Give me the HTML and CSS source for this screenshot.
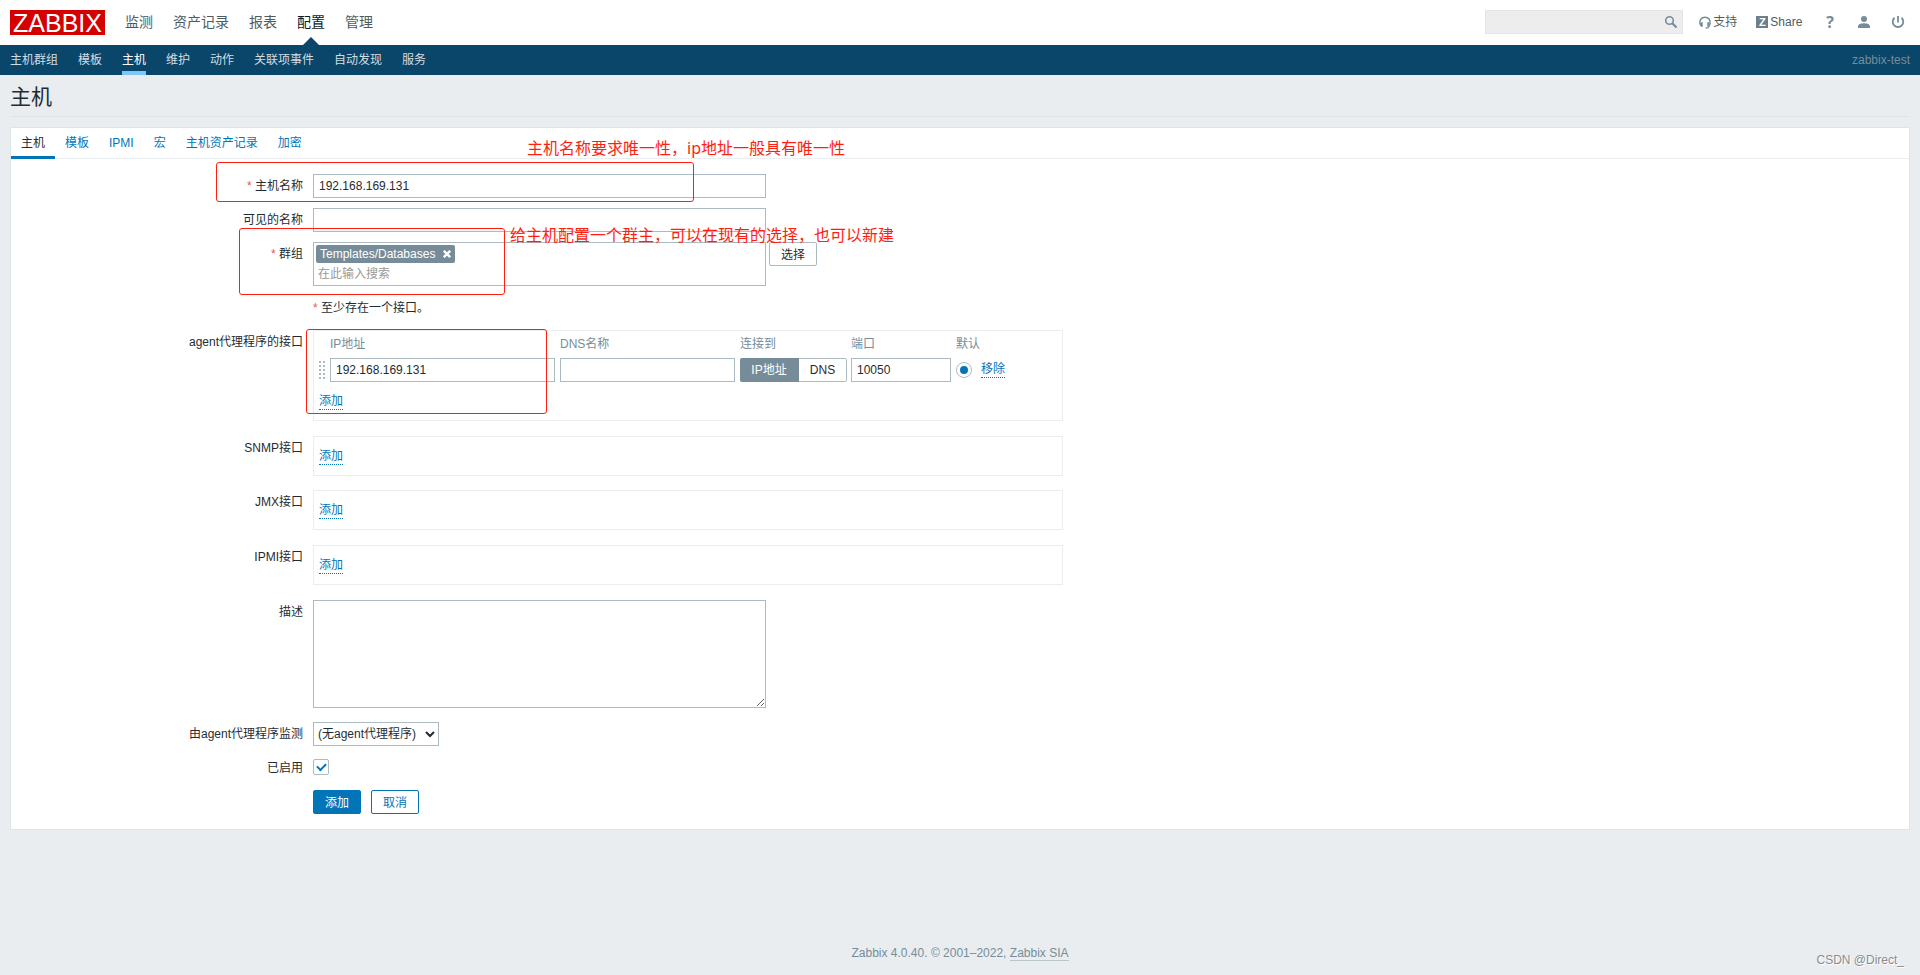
FILE: index.html
```html
<!DOCTYPE html>
<html lang="zh-CN">
<head>
<meta charset="utf-8">
<title>主机</title>
<link rel="stylesheet" href="styles.css">
</head>
<body>
<header>
  <div class="top">
    <a class="logo" href="#">ZABBIX</a>
    <nav class="main-nav" aria-label="主菜单">
      <a href="#">监测</a>
      <a href="#">资产记录</a>
      <a href="#">报表</a>
      <a href="#" class="active">配置</a>
      <a href="#">管理</a>
    </nav>
    <div class="tools">
      <form class="search">
        <input type="text" aria-label="搜索">
        <button type="button" aria-label="搜索">
          <svg width="14" height="14" viewBox="0 0 14 14" fill="none" stroke="#768d99"><circle cx="5.5" cy="5.5" r="3.8" stroke-width="1.6"/><path d="M8.3 8.3l4.2 4.2" stroke-width="2.2"/></svg>
        </button>
      </form>
      <a class="tool-text support" href="#">
        <svg width="12" height="13" viewBox="0 0 12 13" fill="none" stroke="#768d99"><path d="M1.2 8.4C.2 3.6 2.6 1.2 6 1.2s5.8 2.4 4.8 7.2" stroke-width="1.5"/><path d="M2.9 6.2v4.6M9.1 6.2v4.6" stroke-width="1.7"/><path d="M1 7.2q.2 2.6 1.9 3M11 7.2q-.2 3.4-2 4.4l-2.4.4" stroke-width="1.3"/></svg>支持</a>
      <a class="tool-text share" href="#"><span class="z">Z</span>Share</a>
      <a class="help" href="#">?</a>
      <a class="icon" href="#" aria-label="用户"><svg width="14" height="14" viewBox="0 0 14 14" fill="#768d99"><circle cx="7" cy="4" r="3"/><path d="M1 13v-1.5C1 9 4.5 8.3 7 8.3s6 .7 6 3.2V13z"/></svg></a>
      <a class="icon" href="#" aria-label="退出"><svg width="14" height="14" viewBox="0 0 14 14" fill="none" stroke="#768d99" stroke-width="1.8"><path d="M7 1v6.5M3.5 2.7a5.3 5.3 0 1 0 7 0"/></svg></a>
    </div>
  </div>
  <div class="sub">
    <nav class="sub-nav" aria-label="子菜单">
      <a href="#">主机群组</a>
      <a href="#">模板</a>
      <a href="#" class="active">主机</a>
      <a href="#">维护</a>
      <a href="#">动作</a>
      <a href="#">关联项事件</a>
      <a href="#">自动发现</a>
      <a href="#">服务</a>
    </nav>
    <span class="server">zabbix-test</span>
  </div>
</header>

<main>
  <h1>主机</h1>
  <form class="panel">
    <nav class="tabs" aria-label="选项卡">
      <a href="#" class="active">主机</a>
      <a href="#">模板</a>
      <a href="#">IPMI</a>
      <a href="#">宏</a>
      <a href="#">主机资产记录</a>
      <a href="#">加密</a>
    </nav>

    <div class="fields">
      <div class="row">
        <label for="host" class="required">主机名称</label>
        <input id="host" class="wide" type="text" value="192.168.169.131">
      </div>
      <div class="row">
        <label for="visible">可见的名称</label>
        <input id="visible" class="wide" type="text">
      </div>
      <div class="row">
        <label for="groups" class="required">群组</label>
        <div class="group-field">
          <div class="multiselect wide">
            <span class="tag">Templates/Databases
              <button type="button" aria-label="移除"><svg width="8" height="8" viewBox="0 0 8 8" stroke="#fff" stroke-width="2.4"><path d="M.8.8l6.4 6.4M7.2.8L.8 7.2"/></svg></button>
            </span>
            <input id="groups" type="text" placeholder="在此输入搜索">
          </div>
          <button type="button" class="btn grey">选择</button>
        </div>
      </div>
      <div class="row">
        <p class="note required">至少存在一个接口。</p>
      </div>

      <div class="row spaced">
        <span class="label">agent代理程序的接口</span>
        <div class="box agent">
          <table>
            <thead>
              <tr><th></th><th>IP地址</th><th>DNS名称</th><th>连接到</th><th>端口</th><th>默认</th></tr>
            </thead>
            <tbody>
              <tr>
                <td class="drag"><svg width="6" height="18" viewBox="0 0 6 18" fill="none" stroke="#acbbc2" stroke-width="2" stroke-dasharray="2 2"><path d="M1 0v18M5 0v18"/></svg></td>
                <td><input class="ip" type="text" aria-label="IP地址" value="192.168.169.131"></td>
                <td><input class="dns" type="text" aria-label="DNS名称"></td>
                <td class="connect"><div class="segments"><button type="button" class="on">IP地址</button><button type="button">DNS</button></div></td>
                <td><input class="port" type="text" aria-label="端口" value="10050"></td>
                <td><div class="default"><input type="radio" name="default" aria-label="默认" checked><a class="link" href="#">移除</a></div></td>
              </tr>
            </tbody>
          </table>
          <a class="link" href="#">添加</a>
        </div>
      </div>
      <div class="row snmp">
        <span class="label">SNMP接口</span>
        <div class="box"><a class="link" href="#">添加</a></div>
      </div>
      <div class="row spaced">
        <span class="label">JMX接口</span>
        <div class="box"><a class="link" href="#">添加</a></div>
      </div>
      <div class="row spaced">
        <span class="label">IPMI接口</span>
        <div class="box"><a class="link" href="#">添加</a></div>
      </div>
      <div class="row described">
        <label for="desc">描述</label>
        <textarea id="desc" class="wide"></textarea>
      </div>
      <div class="row">
        <label for="proxy">由agent代理程序监测</label>
        <select id="proxy"><option>(无agent代理程序)</option></select>
      </div>
      <div class="row">
        <label for="enabled">已启用</label>
        <input id="enabled" type="checkbox" checked>
      </div>
      <div class="row">
        <div class="actions">
          <button type="button" class="btn primary">添加</button>
          <button type="button" class="btn">取消</button>
        </div>
      </div>
    </div>

    <div class="mark mark-name"></div>
    <div class="mark mark-group"></div>
    <div class="mark mark-ip"></div>
    <p class="remark remark-name">主机名称要求唯一性，ip地址一般具有唯一性</p>
    <p class="remark remark-group">给主机配置一个群主，可以在现有的选择，也可以新建</p>
  </form>
</main>

<footer>Zabbix 4.0.40. © 2001–2022, <a href="#">Zabbix SIA</a></footer>
<div class="watermark">CSDN @Direct_</div>
</body>
</html>
```

FILE: styles.css
```css
* { box-sizing: border-box; }

body {
  margin: 0;
  min-height: 100vh;
  display: flex;
  flex-direction: column;
  background: #e9edf0;
  color: #1f2c33;
  font: 12px/18px "Liberation Sans", "Noto Sans CJK SC", sans-serif;
}

a { color: #0275b8; text-decoration: none; }
svg { display: block; }
p { margin: 0; }

input, textarea, select, button {
  margin: 0;
  font: inherit;
  color: inherit;
}

/* Header */
.top {
  display: flex;
  align-items: flex-start;
  height: 45px;
  padding: 10px 10px 0;
  background: #fff;
}
.logo {
  width: 95px;
  height: 25px;
  background: #d40000;
  color: #fff;
  font-size: 25px;
  line-height: 26px;
  text-align: center;
}
.main-nav {
  display: flex;
  gap: 20px;
  height: 35px;
  margin-left: 20px;
  font-size: 14px;
  line-height: 24px;
}
.main-nav a { color: #4f5b61; }
.main-nav .active { position: relative; color: #0f1a20; }
.main-nav .active::after {
  content: "";
  position: absolute;
  bottom: 0;
  left: 50%;
  margin-left: -8px;
  border: 8px solid transparent;
  border-top: 0;
  border-bottom-color: #0a466a;
}
.tools {
  display: flex;
  align-items: center;
  height: 24px;
  margin-left: auto;
}
.search {
  display: flex;
  align-items: center;
  width: 198px;
  height: 24px;
  background: #ededed;
  border: 1px solid #e2e5e7;
}
.search input[type="text"] {
  flex: 1;
  min-width: 0;
  border: 0;
  background: none;
}
.search button {
  padding: 0 4px;
  border: 0;
  background: none;
}
.tool-text {
  display: flex;
  align-items: center;
  height: 24px;
  color: #4f5b61;
}
.support { gap: 2px; margin-left: 16px; }
.share { gap: 2px; margin-left: 19px; }
.z {
  width: 12px;
  height: 12px;
  background: #6b808b;
  color: #fff;
  font-size: 11px;
  font-weight: bold;
  line-height: 12px;
  text-align: center;
}
.help {
  height: 24px;
  margin: 0 23px 0 24px;
  color: #768d99;
  font: bold 16px/24px "Open Sans", sans-serif;
}
.icon + .icon { margin: 0 5px 0 20px; }

.sub {
  display: flex;
  justify-content: space-between;
  height: 30px;
  padding: 0 10px;
  background: #0a466a;
  line-height: 30px;
}
.sub-nav { display: flex; gap: 20px; }
.sub-nav a { color: #d2dde3; }
.sub-nav .active {
  color: #fff;
  box-shadow: inset 0 -4px #7fc6f7;
}
.server { color: #768d99; }

/* Page */
main { padding: 0 10px; }
h1 {
  margin: 0 0 10px;
  height: 42px;
  border-bottom: 1px solid #dfe4e7;
  font-size: 21px;
  font-weight: normal;
  line-height: 44px;
}
.panel {
  position: relative;
  background: #fff;
  border: 1px solid #dfe4e7;
}
.tabs {
  display: flex;
  height: 31px;
  border-bottom: 1px solid #ebeef0;
  line-height: 30px;
}
.tabs a { height: 31px; padding: 0 10px; }
.tabs .active {
  color: #1f2c33;
  box-shadow: inset 0 -3px #0275b8;
}

.fields {
  display: flex;
  flex-direction: column;
  gap: 10px;
  padding: 15px 0;
}
.row {
  display: grid;
  grid-template-columns: 292px minmax(0, 1fr);
  column-gap: 10px;
  align-items: start;
  justify-items: start;
  min-height: 24px;
}
.row > :last-child { grid-column: 2; }
.row > label, .label { justify-self: end; line-height: 24px; }
.required::before { content: "* "; color: #e45959; }
.note { line-height: 24px; }
.spaced { margin-bottom: 5px; }
.snmp, .described { margin-bottom: 4px; }

input[type="text"], textarea, select, .multiselect {
  border: 1px solid #acbbc2;
  border-radius: 0;
  background: #fff;
}
input[type="text"] { height: 24px; padding: 0 5px; }
.wide { width: 453px; }
textarea.wide { display: block; height: 108px; padding: 5px; }
select { width: 126px; height: 24px; }

.group-field { display: flex; align-items: flex-start; gap: 3px; }
.multiselect { height: 44px; padding: 2px; }
.tag {
  display: flex;
  align-items: center;
  gap: 8px;
  width: max-content;
  height: 18px;
  padding: 0 4px;
  border-radius: 2px;
  background: #768d99;
  color: #fff;
}
.tag button { padding: 0; border: 0; background: none; }
.multiselect input[type="text"] {
  display: block;
  width: 100%;
  height: 22px;
  padding: 0 2px;
  border: 0;
  background: none;
}
::placeholder { color: #999; opacity: 1; }

.btn {
  width: 48px;
  height: 24px;
  padding: 1px 0 0;
  border: 1px solid #0275b8;
  border-radius: 2px;
  background: #fff;
  color: #0275b8;
}
.grey { border-color: #acbbc2; color: #1f2c33; }
.primary { background: #0275b8; color: #fff; }
.actions { display: flex; gap: 10px; }

.box {
  display: flex;
  align-items: center;
  width: 750px;
  height: 40px;
  padding: 2px 5px 0;
  border: 1px solid #ebeef0;
}
.agent {
  flex-direction: column;
  align-items: flex-start;
  height: 91px;
  padding-top: 0;
  gap: 12px;
}
.link { border-bottom: 1px dotted #0275b8; line-height: 15px; }

table { border-collapse: collapse; }
th {
  height: 27px;
  padding: 0 5px 2px 0;
  color: #768d99;
  font-weight: normal;
  text-align: left;
}
td { height: 24px; padding: 0 5px 0 0; }
td input, td svg { display: block; }
.ip { width: 225px; }
.dns { width: 175px; }
.port { width: 100px; }
.connect { padding-right: 4px; }
.default { display: flex; align-items: center; gap: 9px; }
.segments { display: flex; }
.segments button {
  width: 48px;
  height: 24px;
  padding: 0;
  border: 1px solid #acbbc2;
  border-left: 0;
  border-radius: 0 2px 2px 0;
  background: #fff;
}
.segments .on {
  width: 59px;
  border-color: #768d99;
  border-radius: 2px 0 0 2px;
  background: #768d99;
  color: #fff;
}

input[type="radio"], input[type="checkbox"] {
  appearance: none;
  width: 16px;
  height: 16px;
  border: 1px solid #acbbc2;
  background: #fff;
}
input[type="radio"] { padding: 3px; border-radius: 50%; }
input[type="radio"]:checked::after {
  content: "";
  display: block;
  width: 8px;
  height: 8px;
  border-radius: 50%;
  background: #0275b8;
}
input[type="checkbox"] {
  display: grid;
  place-items: center;
  margin-top: 3px;
  padding-bottom: 2px;
  border-radius: 2px;
}
input[type="checkbox"]:checked::after {
  content: "";
  box-sizing: border-box;
  width: 9px;
  height: 6px;
  border: solid #0275b8;
  border-width: 0 0 2px 2px;
  transform: rotate(-45deg);
}

/* Red remarks over the form */
.mark {
  position: absolute;
  border: 1px solid #ff1e10;
  border-radius: 3px;
  pointer-events: none;
}
.mark-name { left: 205px; top: 34px; width: 478px; height: 40px; }
.mark-group { left: 228px; top: 100px; width: 266px; height: 67px; }
.mark-ip { left: 295px; top: 201px; width: 241px; height: 85px; }
.remark {
  position: absolute;
  color: #ff1e10;
  font: 16px/24px "Noto Sans", "Noto Sans CJK SC", sans-serif;
  white-space: nowrap;
}
.remark-name { left: 516px; top: 8px; }
.remark-group { left: 499px; top: 95px; }

footer {
  margin-top: auto;
  padding: 0 0 13px;
  color: #768d99;
  text-align: center;
}
footer a { color: inherit; border-bottom: 1px solid #bac6cc; }
.watermark {
  position: absolute;
  right: 16px;
  bottom: 6px;
  color: #8a8c8e;
  text-shadow: 1px 1px #fff;
}
```
